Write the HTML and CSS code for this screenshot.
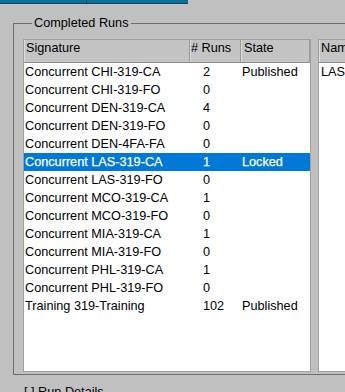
FILE: index.html
```html
<!DOCTYPE html>
<html>
<head>
<meta charset="utf-8">
<link rel="stylesheet" href="styles.css">
</head>
<body>
<div class="tabs"><div class="tab tab-a"></div><div class="tab tab-b"></div></div>
<fieldset class="group">
  <legend class="group-title">Completed Runs</legend>
  <div class="lists">
    <div class="list list-main">
      <div class="head">
        <div class="hcell c-sig">Signature</div>
        <div class="hcell c-runs">&#35; Runs</div>
        <div class="hcell c-state">State</div>
      </div>
      <div class="body">
        <div class="row"><div class="cell c-sig">Concurrent CHI-319-CA</div><div class="cell c-runs num">2</div><div class="cell c-state">Published</div></div>
        <div class="row"><div class="cell c-sig">Concurrent CHI-319-FO</div><div class="cell c-runs num">0</div><div class="cell c-state"></div></div>
        <div class="row"><div class="cell c-sig">Concurrent DEN-319-CA</div><div class="cell c-runs num">4</div><div class="cell c-state"></div></div>
        <div class="row"><div class="cell c-sig">Concurrent DEN-319-FO</div><div class="cell c-runs num">0</div><div class="cell c-state"></div></div>
        <div class="row"><div class="cell c-sig">Concurrent DEN-4FA-FA</div><div class="cell c-runs num">0</div><div class="cell c-state"></div></div>
        <div class="row selected"><div class="cell c-sig">Concurrent LAS-319-CA</div><div class="cell c-runs num">1</div><div class="cell c-state">Locked</div></div>
        <div class="row"><div class="cell c-sig">Concurrent LAS-319-FO</div><div class="cell c-runs num">0</div><div class="cell c-state"></div></div>
        <div class="row"><div class="cell c-sig">Concurrent MCO-319-CA</div><div class="cell c-runs num">1</div><div class="cell c-state"></div></div>
        <div class="row"><div class="cell c-sig">Concurrent MCO-319-FO</div><div class="cell c-runs num">0</div><div class="cell c-state"></div></div>
        <div class="row"><div class="cell c-sig">Concurrent MIA-319-CA</div><div class="cell c-runs num">1</div><div class="cell c-state"></div></div>
        <div class="row"><div class="cell c-sig">Concurrent MIA-319-FO</div><div class="cell c-runs num">0</div><div class="cell c-state"></div></div>
        <div class="row"><div class="cell c-sig">Concurrent PHL-319-CA</div><div class="cell c-runs num">1</div><div class="cell c-state"></div></div>
        <div class="row"><div class="cell c-sig">Concurrent PHL-319-FO</div><div class="cell c-runs num">0</div><div class="cell c-state"></div></div>
        <div class="row"><div class="cell c-sig">Training 319-Training</div><div class="cell c-runs num">102</div><div class="cell c-state">Published</div></div>
      </div>
    </div>
    <div class="list list-side">
      <div class="head">
        <div class="hcell c-name">Name</div>
      </div>
      <div class="body">
        <div class="row"><div class="cell c-name">LAS</div></div>
      </div>
    </div>
  </div>
</fieldset>
<div class="details">[ ] Run Details</div>
</body>
</html>
```
FILE: styles.css
```css
html, body {
  margin: 0;
  padding: 0;
}
body {
  width: 345px;
  height: 392px;
  overflow: hidden;
  background: #c0c0c0;
  font-family: "Liberation Sans", Arial, sans-serif;
  font-size: 12.7px;
  color: #000;
}
.tabs {
  display: flex;
  width: 188px;
  height: 4px;
}
.tab {
  background: #0b6e96;
  border-bottom: 1px solid #0d4a63;
  box-sizing: border-box;
  height: 4px;
}
.tab-a {
  width: 87px;
  border-right: 1px solid #0d3f55;
}
.tab-b {
  width: 101px;
}
.group {
  margin: 12px 0 0 13px;
  padding: 8px 0 2px 9px;
  border: 1px solid #6e6e6e;
  border-right: none;
  width: 420px;
  box-sizing: border-box;
  min-width: 0;
}
.group-title {
  margin-left: 9px;
  padding: 0 2px;
  line-height: 15px;
}
.lists {
  display: flex;
  gap: 7px;
}
.list {
  background: #fff;
  border: 1px solid #a0a0a0;
  height: 331px;
  overflow: hidden;
  flex: none;
}
.list-main {
  width: 286px;
}
.list-side {
  width: 120px;
}
.head {
  display: flex;
  background: #c4c4c4;
  height: 22px;
  border-bottom: 1px solid #8c8c8c;
}
.hcell {
  line-height: 16px;
  padding-left: 2px;
  box-sizing: border-box;
  border-right: 1px solid #9a9a9a;
  border-left: 1px solid #dcdcdc;
  white-space: nowrap;
  overflow: hidden;
}
.row {
  display: flex;
  height: 18px;
  line-height: 18px;
  white-space: nowrap;
}
.row.selected {
  background: #0078d7;
  color: #fff;
  -webkit-text-stroke: 0.25px #fff;
}
.cell {
  box-sizing: border-box;
  overflow: hidden;
}
.c-sig { width: 166px; }
.c-runs { width: 51px; }
.c-state { width: 69px; }
.c-name { width: 120px; }
.hcell.c-sig { padding-left: 1px; }
.hcell.c-runs { padding-left: 0; }
.cell.c-sig { padding-left: 1px; }
.cell.num { padding-left: 13px; }
.cell.c-state { padding-left: 1px; }
.hcell.c-name { padding-left: 1px; }
.cell.c-name { padding-left: 2px; }
.details {
  margin: 9px 0 0 24px;
  line-height: 16px;
}
```
